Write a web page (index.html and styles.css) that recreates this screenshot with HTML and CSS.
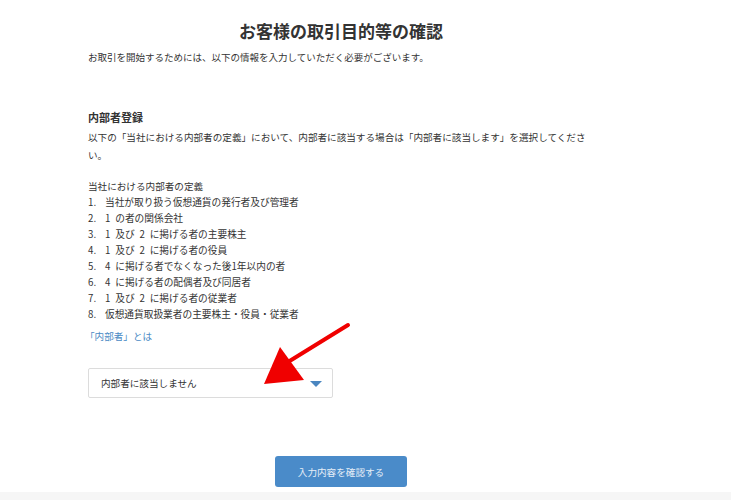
FILE: index.html
```html
<!DOCTYPE html>
<html lang="ja">
<head>
<meta charset="utf-8">
<link rel="stylesheet" href="styles.css">
</head>
<body>
<div class="page">
  <main class="main">
    <h1 class="title">お客様の取引目的等の確認</h1>
    <p class="lead">お取引を開始するためには、以下の情報を入力していただく必要がございます。</p>

    <section class="section">
      <h2 class="heading">内部者登録</h2>
      <p class="desc">以下の「当社における内部者の定義」において、内部者に該当する場合は「内部者に該当します」を選択してください。</p>
      <p class="def-title">当社における内部者の定義</p>
      <ol class="def-list">
        <li><span class="num">1.</span>当社が取り扱う仮想通貨の発行者及び管理者</li>
        <li><span class="num">2.</span>1&ensp;の者の関係会社</li>
        <li><span class="num">3.</span>1&ensp;及び&ensp;2&ensp;に掲げる者の主要株主</li>
        <li><span class="num">4.</span>1&ensp;及び&ensp;2&ensp;に掲げる者の役員</li>
        <li><span class="num">5.</span>4&ensp;に掲げる者でなくなった後1年以内の者</li>
        <li><span class="num">6.</span>4&ensp;に掲げる者の配偶者及び同居者</li>
        <li><span class="num">7.</span>1&ensp;及び&ensp;2&ensp;に掲げる者の従業者</li>
        <li><span class="num">8.</span>仮想通貨取扱業者の主要株主・役員・従業者</li>
      </ol>
      <a class="link" href="#">「内部者」とは</a>
      <div class="select">
        <span class="select-text">内部者に該当しません</span>
        <span class="caret"></span>
      </div>
    </section>

    <div class="actions">
      <button class="btn" type="button">入力内容を確認する</button>
    </div>
  </main>
  <footer class="footer"></footer>

  <svg class="arrow" width="731" height="500" viewBox="0 0 731 500">
    <line x1="348" y1="325" x2="288" y2="362" stroke="#f00000" stroke-width="4" stroke-linecap="round"/>
    <polygon points="280,347 264,384 304,380" fill="#f00000"/>
  </svg>
</div>
</body>
</html>
```

FILE: styles.css
```css
* { box-sizing: border-box; }
html, body { margin: 0; padding: 0; background: #fff; }
body {
  font-family: "Noto Sans CJK JP", "Noto Sans", sans-serif;
  color: #333;
}
.page {
  position: relative;
  width: 731px;
  height: 500px;
  overflow: hidden;
  display: flex;
  flex-direction: column;
}
.main {
  width: 506px;
  margin-left: 88px;
  padding-top: 19px;
  flex: 1;
}
.title {
  margin: 0;
  font-size: 17px;
  line-height: 24px;
  font-weight: 700;
  text-align: center;
  color: #333;
}
.lead {
  margin: 6px 0 0;
  font-size: 9.5px;
  line-height: 16px;
}
.section { margin-top: 44px; }
.heading {
  margin: 0;
  font-size: 11px;
  line-height: 16px;
  font-weight: 700;
}
.desc {
  margin: 3px 0 0;
  font-size: 9.6px;
  line-height: 18px;
}
.def-title {
  margin: 14px 0 0;
  font-size: 9.6px;
  line-height: 16px;
}
.def-list {
  list-style: none;
  margin: 0;
  padding: 0;
  font-size: 9.7px;
  line-height: 16px;
}
.def-list li { display: flex; }
.num { width: 17px; flex: none; }
.link {
  display: block;
  margin-top: 6px;
  font-size: 9.6px;
  line-height: 16px;
  color: #4a8ac4;
  text-decoration: none;
  margin-left: -3px;
}
.select {
  margin-top: 24px;
  width: 245px;
  height: 30px;
  border: 1px solid #dcdcdc;
  border-radius: 2px;
  display: flex;
  align-items: center;
  justify-content: space-between;
  padding: 0 10px 0 12px;
  font-size: 9.6px;
  color: #333;
}
.caret {
  width: 0;
  height: 0;
  border-left: 6px solid transparent;
  border-right: 6px solid transparent;
  border-top: 6px solid #4a86c0;
  margin-top: 2px;
}
.actions {
  margin-top: 58px;
  display: flex;
  justify-content: center;
}
.btn {
  width: 132px;
  height: 31px;
  border: none;
  border-radius: 3px;
  background: #4a8bc9;
  color: #e6eef7;
  font-family: inherit;
  font-size: 9.6px;
  padding: 0;
}
.footer {
  height: 8px;
  background: #f6f6f6;
  flex: none;
}
.arrow {
  position: absolute;
  left: 0;
  top: 0;
  pointer-events: none;
}
```
